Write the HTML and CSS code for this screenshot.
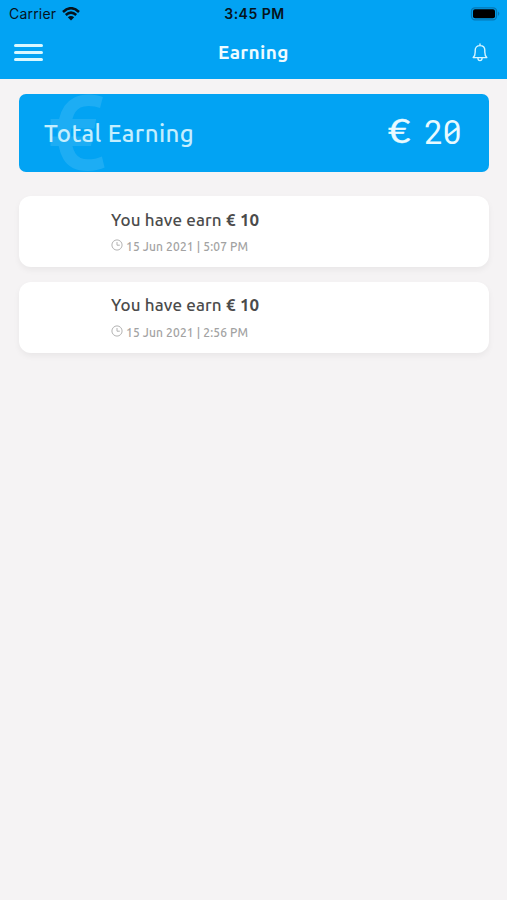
FILE: index.html
```
<!DOCTYPE html>
<html lang="en">
  <head>
    <meta charset="utf-8">
    <title>Earning</title>
    <link rel="stylesheet" href="styles.css">
  </head>
  <body>
    <header>
      <div class="status">
        <div class="carrier">
          <span>Carrier</span>
          <svg class="wifi" width="18" height="14" viewBox="0 0 18 14">
            <path d="M1 5Q9 -2.6 17 5M3.8 8Q9 3.2 14.2 8" fill="none" stroke="#06131c" stroke-width="2.5"/>
            <path d="M9 13.6L5.8 10.3Q9 7.8 12.2 10.3Z" fill="#06131c"/>
          </svg>
        </div>
        <span class="time">3:45 PM</span>
        <svg class="battery" width="30" height="14" viewBox="0 0 30 14">
          <rect x="1.5" y=".8" width="25" height="12" rx="3.5" fill="none" stroke="#0678b5" stroke-width="1.3"/>
          <rect x="3" y="2.3" width="22" height="9" rx="2" fill="#000"/>
          <path d="M28 4.6Q30.6 6.8 28 9Z" fill="#0678b5"/>
        </svg>
      </div>
      <div class="nav">
        <div class="menu"><i></i><i></i><i></i></div>
        <h1>Earning</h1>
        <svg class="bell" width="16" height="19" viewBox="0 0 16 19">
          <path d="M1.2 14.6C2.7 13.2 3.2 11.6 3.2 9V7.2C3.2 4.5 5 2.6 8 2.6S12.8 4.5 12.8 7.2V9C12.8 11.6 13.3 13.2 14.8 14.6ZM8 2.4V1M5.9 15.2C6.1 18.4 9.9 18.4 10.1 15.2" fill="none" stroke="#d6f5ff" stroke-width="1.4" stroke-linecap="round" stroke-linejoin="round"/>
        </svg>
      </div>
    </header>
    <main>
      <div class="total">
        <span class="watermark">€</span>
        <span class="totalLabel">Total Earning</span>
        <div class="amount">
          <span class="currency">€</span>
          <span class="value">20</span>
        </div>
      </div>
      <div class="card">
        <p class="title"><span>You have earn</span> <b>€ 10</b></p>
        <p class="date">
          <svg width="12" height="12" viewBox="0 0 12 12"><path d="M6 .9A5.1 5.1 0 1 0 6 11.1A5.1 5.1 0 1 0 6 .9M6 3V6.2H8.8" fill="none" stroke="#aaa" stroke-width=".9"/></svg>
          <span>15 Jun 2021 | 5:07 PM</span>
        </p>
      </div>
      <div class="card">
        <p class="title"><span>You have earn</span> <b>€ 10</b></p>
        <p class="date">
          <svg width="12" height="12" viewBox="0 0 12 12"><path d="M6 .9A5.1 5.1 0 1 0 6 11.1A5.1 5.1 0 1 0 6 .9M6 3V6.2H8.8" fill="none" stroke="#aaa" stroke-width=".9"/></svg>
          <span>15 Jun 2021 | 2:56 PM</span>
        </p>
      </div>
    </main>
  </body>
</html>
```
FILE: styles.css
```
body {
  margin: 0;
  min-height: 900px;
  background-color: #f5f3f4;
  font-family: Ubuntu, 'Noto Sans', sans-serif;
}

header {
  height: 79px;
  background-color: #02a3f3;
}

h1, p {
  margin: 0;
}

svg {
  display: block;
}

.status {
  display: grid;
  grid-template-columns: 1fr auto 1fr;
  align-items: center;
  height: 27px;
  padding: 0 7px 0 9px;
  font-family: Inter, sans-serif;
  font-size: 14px;
  color: #06131c;
}

.carrier {
  display: flex;
  align-items: center;
  gap: 6px;
  letter-spacing: 0.2px;
}

.time {
  font-weight: 600;
  letter-spacing: 0.5px;
}

.battery {
  justify-self: end;
}

.nav {
  display: grid;
  grid-template-columns: 1fr auto 1fr;
  align-items: center;
  height: 50px;
  padding: 0 19px 0 14px;
}

.menu {
  display: flex;
  flex-direction: column;
  gap: 4px;
  width: 29px;
}

.menu i {
  height: 3px;
  border-radius: 2px;
  background-color: #d9f8ff;
}

h1 {
  margin-left: 5px;
  font-size: 19px;
  line-height: 24px;
  letter-spacing: 0.4px;
  color: #eefbff;
}

.bell {
  justify-self: end;
}

main {
  padding: 15px 18px 0 19px;
}

.total {
  display: flex;
  align-items: center;
  justify-content: space-between;
  position: relative;
  overflow: hidden;
  height: 78px;
  margin-bottom: 24px;
  padding: 0 27px 0 25px;
  box-sizing: border-box;
  border-radius: 7px;
  background-color: #02a3f3;
}

/* Big faded sign behind the label */
.watermark {
  position: absolute;
  left: 28px;
  top: -15px;
  font-size: 105px;
  line-height: 104px;
  font-weight: bold;
  color: #1dadf4;
}

.totalLabel {
  position: relative;
  font-size: 24px;
  font-weight: 500;
  letter-spacing: 0.4px;
  color: #c4eefe;
}

.amount {
  display: flex;
  align-items: center;
  gap: 15px;
  padding-bottom: 4px;
  color: #e8faff;
}

.currency {
  font-family: Lato, sans-serif;
  font-size: 32px;
  line-height: 40px;
  -webkit-text-stroke: 0.4px #e8faff;
  transform: scaleX(1.2);
}

.value {
  font-family: 'Roboto Mono', Inter, monospace;
  font-feature-settings: 'zero';
  font-size: 34px;
  line-height: 40px;
  letter-spacing: -1px;
  transform: scaleX(0.94);
}

.card {
  height: 71px;
  margin-bottom: 15px;
  padding: 12px 0 0 92px;
  box-sizing: border-box;
  border-radius: 12px;
  background-color: #fff;
  box-shadow: 0 3px 6px rgba(0, 0, 0, 0.05);
}

.title {
  font-size: 17px;
  line-height: 24px;
  font-weight: 500;
  letter-spacing: 0.15px;
  color: #4b4b4b;
}

.card + .card .title {
  margin-top: -1px;
}

.date {
  display: flex;
  align-items: center;
  gap: 3px;
  margin-top: 6px;
  font-size: 12px;
  line-height: 18px;
  font-weight: 500;
  letter-spacing: 0.15px;
  color: #a2a2a2;
}

.card + .card .date {
  margin-top: 7px;
}

.date svg {
  position: relative;
  top: -2px;
}
```
